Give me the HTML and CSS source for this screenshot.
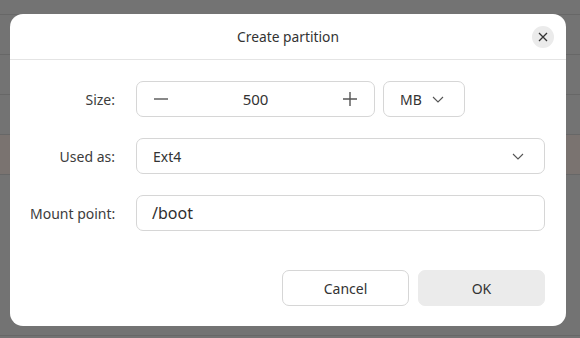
FILE: index.html
```html
<!DOCTYPE html>
<html>
<head>
  <link rel="stylesheet" href="styles.css">
</head>
<body>
  <div class="backdrop">
    <div class="bg-row"></div>
    <div class="bg-row"></div>
    <div class="bg-row"></div>
    <div class="bg-row tinted"></div>
    <div class="bg-row tall"></div>
  </div>

  <div class="dialog">
    <div class="header">
      <div></div>
      <div class="title">Create partition</div>
      <div class="close-wrap">
        <button class="close">
          <svg width="10" height="10" viewBox="0 0 10 10"><path d="M1 1L9 9M9 1L1 9" stroke="#333" stroke-width="1.3" fill="none"/></svg>
        </button>
      </div>
    </div>

    <div class="form">
      <div class="label">Size:</div>
      <div class="size-row">
        <div class="spin">
          <svg width="14" height="14" viewBox="0 0 14 14"><path d="M0 7H14" stroke="#555" stroke-width="1.4"/></svg>
          <span class="spin-value">500</span>
          <svg width="14" height="14" viewBox="0 0 14 14"><path d="M0 7H14M7 0V14" stroke="#555" stroke-width="1.4"/></svg>
        </div>
        <div class="unit">
          <span>MB</span>
          <svg class="chevron" width="12" height="7" viewBox="0 0 12 7"><path d="M1 1L6 6L11 1" stroke="#555" stroke-width="1.1" fill="none"/></svg>
        </div>
      </div>

      <div class="label">Used as:</div>
      <div class="select">
        <span>Ext4</span>
        <svg class="chevron" width="12" height="7" viewBox="0 0 12 7"><path d="M1 1L6 6L11 1" stroke="#555" stroke-width="1.1" fill="none"/></svg>
      </div>

      <div class="label">Mount point:</div>
      <div class="entry">/boot</div>
    </div>

    <div class="actions">
      <button class="btn">Cancel</button>
      <button class="btn ok">OK</button>
    </div>
  </div>
</body>
</html>
```

FILE: styles.css
```css
body {
  margin: 0;
  width: 580px;
  height: 338px;
  overflow: hidden;
  background-color: #737373;
  font-family: "Noto Sans", "Open Sans", sans-serif;
  color: #333;
  position: relative;
}

.backdrop {
  display: flex;
  flex-direction: column;
  padding-top: 14px;
}

.bg-row {
  height: 39px;
  border-top: 1px solid #676767;
}

.bg-row.tinted {
  background-color: #7a7370;
}

.bg-row.tall {
  height: 160px;
  border-bottom: 1px solid #676767;
}

.dialog {
  position: absolute;
  left: 10px;
  top: 14px;
  width: 556px;
  height: 312px;
  background-color: white;
  border-radius: 13px;
  display: flex;
  flex-direction: column;
  box-sizing: border-box;
}

.header {
  height: 45px;
  border-bottom: 1px solid #e4e4e4;
  display: grid;
  grid-template-columns: 1fr auto 1fr;
  align-items: center;
}

.title {
  font-size: 13.8px;
  color: #333;
}

.close-wrap {
  display: flex;
  justify-content: flex-end;
  padding-right: 12px;
}

.close {
  width: 22px;
  height: 22px;
  border-radius: 50%;
  border: none;
  background-color: #ebebeb;
  display: flex;
  align-items: center;
  justify-content: center;
  padding: 0;
}

.form {
  display: grid;
  grid-template-columns: 85px 1fr;
  column-gap: 21px;
  row-gap: 21px;
  padding: 21px 21px 0 20px;
  align-items: center;
}

.label {
  text-align: right;
  font-size: 14px;
  color: #3c3c3c;
  white-space: nowrap;
}

.size-row {
  display: flex;
  gap: 8px;
}

.spin, .unit, .select, .entry {
  height: 36px;
  box-sizing: border-box;
  border: 1px solid #d6d6d6;
  border-radius: 7px;
  display: flex;
  align-items: center;
  font-size: 14px;
  color: #333;
}

.spin {
  width: 239px;
  padding: 0 17px 0 17px;
  justify-content: space-between;
}

.spin-value {
  font-size: 15px;
}

.unit {
  width: 82px;
  padding: 0 20px 0 16px;
  justify-content: space-between;
}

.select {
  padding: 0 20px 0 16px;
  justify-content: space-between;
}

.entry {
  padding: 0 15px;
  font-size: 16px;
  color: #2e2e2e;
}

.actions {
  display: flex;
  justify-content: flex-end;
  gap: 9px;
  padding: 39px 21px 0 0;
}

.btn {
  width: 127px;
  height: 36px;
  border-radius: 7px;
  border: 1px solid #d6d6d6;
  background-color: white;
  font-family: "Noto Sans", "Open Sans", sans-serif;
  font-size: 14px;
  color: #333;
}

.btn.ok {
  border-color: #ebebeb;
  background-color: #ebebeb;
}
```
